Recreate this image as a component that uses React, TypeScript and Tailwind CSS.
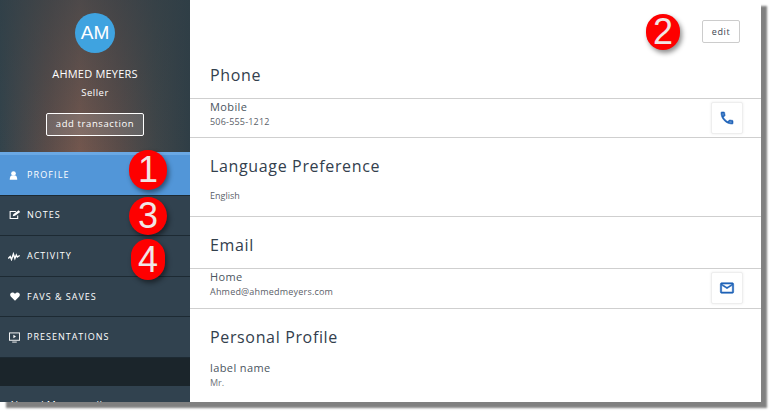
import React from 'react';

const UserIcon = () => (
  <svg viewBox="0 0 10 10" className="w-[9px] h-[9px] fill-white">
    <circle cx="5" cy="2.8" r="2.6" />
    <path d="M0.8 9.6c0-3 1.2-4.4 2.4-4.6h3.6c1.2.2 2.4 1.6 2.4 4.6z" />
  </svg>
);

const NoteIcon = () => (
  <svg viewBox="0 0 12 10" className="w-[12px] h-[9px]" fill="none" stroke="white">
    <path d="M9 6v3.4H.6V1.6H7" strokeWidth="1.2" />
    <path d="M3.5 7l.6-2.4L10 .4l1.8 1.8L6 6.4z" fill="white" stroke="none" />
  </svg>
);

const ActivityIcon = () => (
  <svg viewBox="0 0 13 9" className="w-[13px] h-[9px]" fill="none" stroke="white" strokeWidth="1.4">
    <path d="M0.3 6.5 2.2 4.5l1.3 3 1.9-5.5 1.5 4.5 1.400-3.5 1 2 2.4-1.5" />
  </svg>
);

const HeartIcon = () => (
  <svg viewBox="0 0 12 10" className="w-[10px] h-[9px] fill-white">
    <path d="M6 10L.9 5C-.6 3.3.2.3 3 .2 4.3.2 5.4.9 6 1.900 6.600.9 7.700.2 9 .2c2.800.1 3.600 3.100 2.100 4.800z" />
  </svg>
);

const ScreenIcon = () => (
  <svg viewBox="0 0 12 11" className="w-[11px] h-[11px]" fill="none" stroke="white" strokeWidth="1">
    <rect x="0.5" y="0.5" width="11" height="8" />
    <path d="M4.8 2.6l2.800 1.900-2.800 1.900z" fill="white" stroke="none" />
    <path d="M3.5 10.500h5" />
  </svg>
);

const PhoneIcon = () => (
  <svg viewBox="0 0 24 24" className="w-[16px] h-[16px] fill-[#1f63b8] stroke-[#1f63b8] stroke-[0.9]">
    <path d="M6.54 5c.06.89.21 1.76.45 2.59l-1.2 1.2c-.41-1.2-.67-2.47-.76-3.79h1.51m9.860 12.020c.85.24 1.72.39 2.6.45v1.490c-1.32-.09-2.59-.35-3.8-.75l1.2-1.190M7.5 3H4c-.55 0-1 .45-1 1 0 9.390 7.610 17 17 17 .55 0 1-.45 1-1v-3.490c0-.55-.45-1-1-1-1.240 0-2.450-.2-3.570-.57-.1-.04-.21-.05-.31-.05-.26 0-.51.1-.71.29l-2.200 2.200c-2.830-1.450-5.150-3.760-6.590-6.590l2.200-2.200c.28-.28.36-.67.25-1.020C8.700 6.450 8.500 5.250 8.500 4c0-.55-.45-1-1-1z" />
  </svg>
);

const MailIcon = () => (
  <svg viewBox="0 0 24 24" className="w-[16px] h-[16px] fill-[#1f63b8] stroke-[#1f63b8] stroke-[0.8]">
    <path d="M22 6c0-1.100-.9-2-2-2H4c-1.100 0-2 .9-2 2v12c0 1.100.9 2 2 2h16c1.100 0 2-.9 2-2V6zm-2 0l-8 5-8-5h16zm0 12H4V8l8 5 8-5v10z" />
  </svg>
);

const navItems = [
  { label: 'NOTES', icon: <NoteIcon />, h: 'h-[40px] pb-[2px]' },
  { label: 'ACTIVITY', icon: <ActivityIcon />, h: 'h-[41px]' },
  { label: 'FAVS & SAVES', icon: <HeartIcon />, h: 'h-[40px]' },
  { label: 'PRESENTATIONS', icon: <ScreenIcon />, h: 'h-[41px]' },
];

const Badge = ({ n, className }: { n: number; className: string }) => (
  <div
    className={`absolute rounded-full bg-[#fe0000] flex items-center justify-center text-[#f0e6e6] text-[36px] leading-none font-['Liberation_Sans',sans-serif] shadow-[2px_3px_5px_rgba(0,0,0,0.45)] ${className}`}
  >
    {n}
  </div>
);

const Row = ({ label, value, icon, h }: { label: string; value: string; icon: React.ReactNode; h: string }) => (
  <div className={`${h} border-b border-[#cfcfcf] pl-[20px] pr-[18px] flex items-start justify-between`}>
    <div>
      <div className="text-[11px] leading-[16px] tracking-[0.4px] text-[#4a5560]">{label}</div>
      <div className="text-[9px] leading-[13px] tracking-[0.2px] text-[#5a6068]">{value}</div>
    </div>
    <div className="mt-[3px] w-[32px] h-[32px] bg-white border border-[#eeeeee] rounded-[2px] shadow-[0_0_3px_rgba(0,0,0,0.08)] flex items-center justify-center">
      {icon}
    </div>
  </div>
);

const Heading = ({ children, className }: { children: React.ReactNode; className: string }) => (
  <h2 className={`pl-[20px] text-[16px] leading-[22px] tracking-[0.65px] text-[#33404d] ${className}`}>{children}</h2>
);

export default function App() {
  return (
    <div className="w-[776px] h-[417px] bg-white overflow-hidden font-['Open_Sans',sans-serif]">
      <div className="relative w-[761px] h-[402px] bg-white flex shadow-[6px_6px_2px_rgba(60,60,60,0.65)]">
        <aside className="w-[190px] h-[402px] shrink-0 bg-[#31424f] overflow-hidden flex flex-col">
          <div className="h-[152px] shrink-0 bg-[linear-gradient(180deg,rgba(47,62,70,0.55)_0%,rgba(47,62,70,0)_100%),linear-gradient(90deg,#33434b_0%,#5a4c49_25%,#73574e_42%,#5a4c49_62%,#3f4548_82%,#2f3e46_100%)] flex flex-col items-center pt-[13px]">
            <div className="w-[40px] h-[40px] rounded-full bg-[#3fa3e0] flex items-center justify-center text-white text-[19px] font-['Liberation_Sans',sans-serif]">
              AM
            </div>
            <div className="mt-[14px] text-[11px] leading-[14px] text-white tracking-[0.2px]">AHMED MEYERS</div>
            <div className="mt-[5px] text-[9.5px] leading-[14px] text-white tracking-[0.5px]">Seller</div>
            <button className="mt-[13px] w-[98px] h-[23px] border border-white rounded-[2px] bg-white/15 text-white text-[9.5px] tracking-[0.6px]">
              add transaction
            </button>
          </div>
          <div className="h-[44px] shrink-0 bg-[#5296d8] border-t-[3px] border-[#6aa8e4] border-b border-b-[#1d2a33] flex items-center pl-[9px] gap-[9px] text-white text-[9px] font-medium tracking-[1.1px]">
            <UserIcon />
            <span>PROFILE</span>
          </div>
          {navItems.map((item) => (
            <div
              key={item.label}
              className={`${item.h} shrink-0 border-b border-[#1d2a33] flex items-center text-white text-[9px] font-medium tracking-[1px]`}
            >
              <span className="w-[27px] flex justify-center pl-[2px]">{item.icon}</span>
              <span>{item.label}</span>
            </div>
          ))}
          <div className="h-[28px] shrink-0 bg-[#1b252b]" />
          <div className="pl-[9px] pt-[12px] text-[10px] leading-[14px] text-white tracking-[0.3px]">Ahmed Meyers call</div>
        </aside>

        <main className="flex-1 min-w-0 bg-white flex flex-col">
          <div className="h-[64px] shrink-0 flex justify-end pt-[20px] pr-[21px]">
            <button className="w-[38px] h-[23px] border border-[#cccccc] rounded-[2px] text-[9px] tracking-[0.6px] text-[#3a4450]">
              edit
            </button>
          </div>
          <Heading className="h-[35px] border-b border-[#cfcfcf]">Phone</Heading>
          <Row h="h-[39px]" label="Mobile" value="506-555-1212" icon={<PhoneIcon />} />
          <Heading className="mt-[17px]">Language Preference</Heading>
          <div className="h-[40px] border-b border-[#cfcfcf] pl-[20px] pt-[12px] text-[9px] leading-[13px] text-[#5a6068]">English</div>
          <Heading className="mt-[17px] h-[35px] border-b border-[#cfcfcf]">Email</Heading>
          <Row h="h-[40px]" label="Home" value="Ahmed@ahmedmeyers.com" icon={<MailIcon />} />
          <Heading className="mt-[17px]">Personal Profile</Heading>
          <div className="pl-[20px] pt-[12px]">
            <div className="text-[11px] leading-[16px] tracking-[0.4px] text-[#4a5560]">label name</div>
            <div className="text-[9px] leading-[13px] text-[#70757a]">Mr.</div>
          </div>
        </main>

        <Badge n={1} className="left-[129px] top-[150px] w-[38px] h-[40px]" />
        <Badge n={3} className="left-[129px] top-[197px] w-[38px] h-[38px]" />
        <Badge n={4} className="left-[131px] top-[239px] w-[34px] h-[41px]" />
        <Badge n={2} className="left-[646px] top-[14px] w-[34px] h-[36px]" />
      </div>
    </div>
  );
}
